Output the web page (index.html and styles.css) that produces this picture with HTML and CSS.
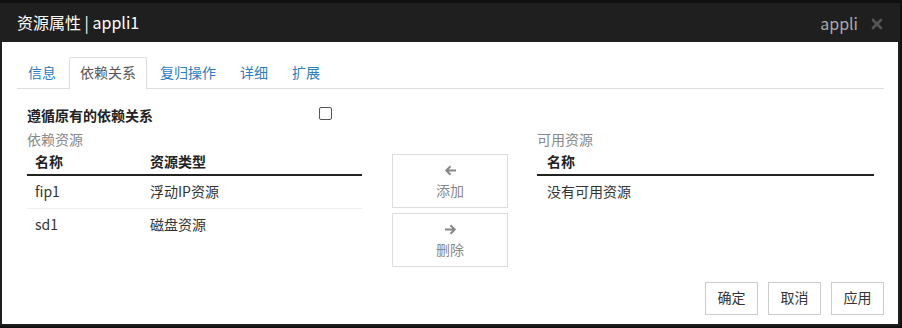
FILE: index.html
```html
<!DOCTYPE html>
<html lang="zh-CN">
<head>
<meta charset="utf-8">
<title>资源属性</title>
<link rel="stylesheet" href="styles.css">
</head>
<body>
<div class="dialog">
  <div class="dlg-header">
    <div class="dlg-title">资源属性 | appli1</div>
    <div class="dlg-tools">
      <span class="dlg-name">appli</span>
      <svg class="dlg-close" width="12" height="12" viewBox="0 0 12 12"><path d="M2 2L10 10M10 2L2 10" stroke="#555" stroke-width="2.6" stroke-linecap="round"/></svg>
    </div>
  </div>
  <div class="dlg-body">
    <ul class="tabs">
      <li class="tab">信息</li>
      <li class="tab active">依赖关系</li>
      <li class="tab">复归操作</li>
      <li class="tab">详细</li>
      <li class="tab">扩展</li>
    </ul>
    <div class="pane">
      <div class="check-row">
        <span class="check-label">遵循原有的依赖关系</span>
        <span class="checkbox"></span>
      </div>
      <div class="lists">
        <div class="list">
          <div class="list-title">依赖资源</div>
          <table class="tbl">
            <thead><tr><th class="c1">名称</th><th>资源类型</th></tr></thead>
            <tbody>
              <tr><td class="c1">fip1</td><td>浮动IP资源</td></tr>
              <tr><td class="c1">sd1</td><td>磁盘资源</td></tr>
            </tbody>
          </table>
        </div>
        <div class="moves">
          <div class="move-btn">
            <svg width="13" height="11" viewBox="0 0 13 11"><path d="M12 5.5H2.8M6.5 1.3L2.3 5.5L6.5 9.7" fill="none" stroke="#888" stroke-width="2"/></svg>
            <span>添加</span>
          </div>
          <div class="move-btn">
            <svg width="13" height="11" viewBox="0 0 13 11"><path d="M1 5.5H10.2M6.5 1.3L10.7 5.5L6.5 9.7" fill="none" stroke="#888" stroke-width="2"/></svg>
            <span>删除</span>
          </div>
        </div>
        <div class="list">
          <div class="list-title">可用资源</div>
          <table class="tbl">
            <thead><tr><th>名称</th></tr></thead>
            <tbody>
              <tr><td>没有可用资源</td></tr>
            </tbody>
          </table>
        </div>
      </div>
    </div>
    <div class="footer">
      <button class="btn">确定</button>
      <button class="btn">取消</button>
      <button class="btn">应用</button>
    </div>
  </div>
</div>
</body>
</html>
```
FILE: styles.css
```css
html, body {
  margin: 0;
  padding: 0;
  background: #111;
}
body {
  font-family: "Noto Sans CJK SC", "Open Sans", sans-serif;
  font-size: 14px;
  color: #333;
  padding-top: 3px;
}
.dialog {
  width: 896px;
  border: 2px solid #1f1f1f;
  border-top: 0;
  background: #1f1f1f;
}
.dlg-header {
  height: 39px;
  display: flex;
  align-items: center;
  justify-content: space-between;
  padding: 0 15px 0 15px;
}
.dlg-title {
  color: #fff;
  font-size: 16px;
  line-height: 22px;
  margin-top: -1px;
}
.dlg-tools {
  display: flex;
  align-items: center;
  gap: 13px;
}
.dlg-name {
  color: #aaa;
  font-size: 16px;
  line-height: 20px;
}
.dlg-close {
  display: block;
  margin-top: 2px;
}
.dlg-body {
  background: #fff;
  padding: 15px 14px 9px 15px;
}
.tabs {
  list-style: none;
  margin: 0;
  padding: 0;
  display: flex;
  border-bottom: 1px solid #ddd;
}
.tab {
  padding: 5px 10px 7px;
  line-height: 18px;
  border: 1px solid transparent;
  border-bottom: 0;
  margin-right: 2px;
  margin-bottom: -1px;
  color: #2b7cc0;
  border-radius: 2px 2px 0 0;
}
.tab.active {
  color: #555;
  background: #fff;
  border-color: #ddd;
  padding-bottom: 8px;
}
.pane {
  padding: 17px 10px 0 10px;
}
.check-row {
  display: flex;
  align-items: center;
  line-height: 18px;
}
.check-label {
  width: 292px;
  font-weight: bold;
  color: #222;
}
.checkbox {
  width: 11px;
  height: 11px;
  border: 1px solid #555;
  border-radius: 2px;
  margin-top: -4px;
}
.lists {
  display: grid;
  grid-template-columns: 335px 116px 1fr;
  column-gap: 30px;
  margin-top: 6px;
}
.lists .list:last-child {
  margin-left: -1px;
}
.list-title {
  color: #888;
  line-height: 18px;
}
.tbl {
  width: 100%;
  border-collapse: collapse;
}
.tbl th {
  text-align: left;
  font-weight: bold;
  color: #222;
  padding: 4px 10px;
  line-height: 18px;
  border-bottom: 2px solid #222;
}
.tbl td {
  padding: 6px 10px 8px;
  line-height: 18px;
  color: #333;
  border-top: 1px solid #eee;
}
.tbl tbody tr:first-child td {
  border-top: 0;
}
.tbl .c1 {
  width: 95px;
  padding-left: 8px;
}
.moves {
  margin-top: 24px;
  display: flex;
  flex-direction: column;
  gap: 5px;
}
.move-btn {
  border: 1px solid #ddd;
  padding: 7px 0 8px;
  display: flex;
  flex-direction: column;
  align-items: center;
  color: #888;
}
.move-btn svg {
  display: block;
  margin: 3px 0 3px;
}
.move-btn span {
  margin-top: 2px;
  line-height: 18px;
}
.footer {
  margin-top: 15px;
  display: flex;
  justify-content: flex-end;
  gap: 10px;
}
.btn {
  width: 53px;
  height: 33px;
  padding: 0 0 2px;
  background: #fff;
  border: 1px solid #ccc;
  font-family: inherit;
  font-size: 14px;
  color: #333;
  line-height: 19px;
}
```
